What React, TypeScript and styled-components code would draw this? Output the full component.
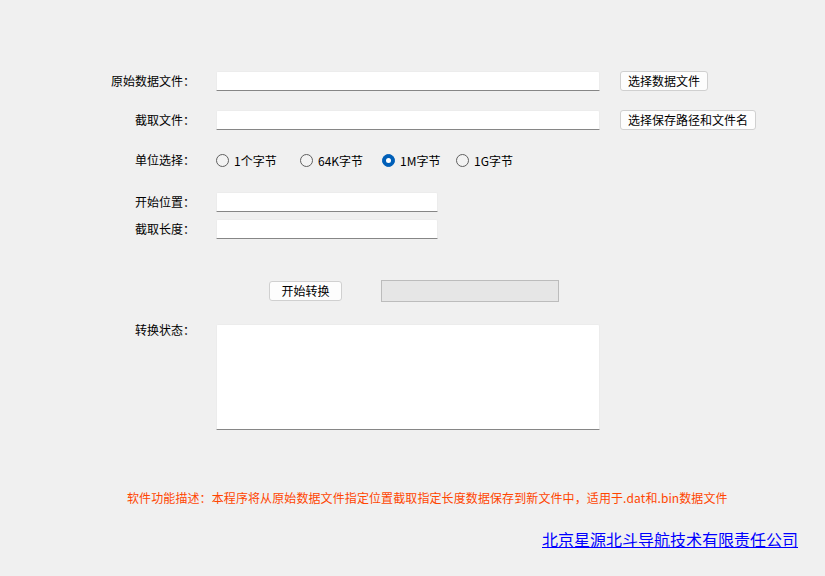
import styled, { createGlobalStyle } from "styled-components";

const Global = createGlobalStyle`
  html, body {
    margin: 0;
    padding: 0;
    background: #f0f0f0;
  }
  body {
    font-family: "Noto Sans CJK SC", "Noto Sans", sans-serif;
    font-size: 12px;
    color: #000;
  }
`;

const Window = styled.div`
  width: 825px;
  height: 576px;
  background: #f0f0f0;
  display: flex;
  flex-direction: column;
  overflow: hidden;
`;

const Row = styled.div<{ $top: number; $h: number; $align?: string }>`
  margin-top: ${(p) => p.$top}px;
  height: ${(p) => p.$h}px;
  display: flex;
  align-items: ${(p) => p.$align || "center"};
`;

// the full-width colon leaves ~7px blank on its right, so the box runs past 188
const Label = styled.label<{ $mt?: number }>`
  width: 195px;
  flex: none;
  text-align: right;
  margin-top: ${(p) => p.$mt || 0}px;
  line-height: 16px;
  margin-right: 21px;
  white-space: nowrap;
`;

const Field = styled.div<{ $w: number; $h?: number }>`
  width: ${(p) => p.$w}px;
  height: ${(p) => p.$h || 20}px;
  box-sizing: border-box;
  background: #fff;
  border: 1px solid #ececec;
  border-bottom: 1px solid #868686;
  border-radius: 2px 2px 0 0;
  flex: none;
`;

const Button = styled.button<{ $ml: number; $w?: number }>`
  margin-left: ${(p) => p.$ml}px;
  width: ${(p) => (p.$w ? `${p.$w}px` : "auto")};
  height: 20px;
  padding: 0 7px;
  box-sizing: border-box;
  background: #fdfdfd;
  border: 1px solid #d0d0d0;
  border-radius: 3px;
  font-family: inherit;
  font-size: 12px;
  line-height: 16px;
  color: #000;
  white-space: nowrap;
  flex: none;
`;

const RadioGroup = styled.div`
  display: flex;
  align-items: center;
`;

const RadioOption = styled.div<{ $w?: number }>`
  display: flex;
  align-items: center;
  width: ${(p) => (p.$w ? `${p.$w}px` : "auto")};
  gap: 5px;
  white-space: nowrap;
`;

const Dot = styled.span<{ $on?: boolean }>`
  width: 13px;
  height: 13px;
  box-sizing: border-box;
  border-radius: 50%;
  flex: none;
  display: flex;
  align-items: center;
  justify-content: center;
  background: ${(p) => (p.$on ? "#005fb8" : "#f3f3f3")};
  border: 1px solid ${(p) => (p.$on ? "#005fb8" : "#5f5f5f")};
  &::after {
    content: "";
    display: ${(p) => (p.$on ? "block" : "none")};
    width: 5px;
    height: 5px;
    border-radius: 50%;
    background: #fff;
  }
`;

const Progress = styled.div`
  margin-left: 39px;
  width: 178px;
  height: 22px;
  box-sizing: border-box;
  background: #e6e6e6;
  border: 1px solid #bcbcbc;
`;

const Desc = styled.div`
  margin-top: 60px;
  height: 16px;
  line-height: 16px;
  padding-left: 127px;
  color: #ff4500;
  white-space: nowrap;
  letter-spacing: 0.1px;
`;

const LinkRow = styled.div`
  margin-top: 23px;
  height: 20px;
  padding-left: 542px;
  line-height: 20px;
`;

const Company = styled.a`
  font-size: 16px;
  color: #0000ff;
  text-decoration: underline;
  white-space: nowrap;
`;

const units = [
  { text: "1个字节", w: 84 },
  { text: "64K字节", w: 82 },
  { text: "1M字节", w: 74, on: true },
  { text: "1G字节" },
];

export default function App() {
  return (
    <Window>
      <Global />
      <Row $top={71} $h={20}>
        <Label>原始数据文件：</Label>
        <Field $w={384} />
        <Button $ml={20}>选择数据文件</Button>
      </Row>
      <Row $top={19} $h={20}>
        <Label>截取文件：</Label>
        <Field $w={384} />
        <Button $ml={20}>选择保存路径和文件名</Button>
      </Row>
      <Row $top={20} $h={20}>
        <Label>单位选择：</Label>
        <RadioGroup>
          {units.map((u) => (
            <RadioOption key={u.text} $w={u.w}>
              <Dot $on={u.on} />
              {u.text}
            </RadioOption>
          ))}
        </RadioGroup>
      </Row>
      <Row $top={22} $h={20}>
        <Label>开始位置：</Label>
        <Field $w={222} />
      </Row>
      <Row $top={7} $h={20}>
        <Label>截取长度：</Label>
        <Field $w={222} />
      </Row>
      <Row $top={41} $h={22}>
        <Label />
        <Button $ml={53} $w={73}>开始转换</Button>
        <Progress />
      </Row>
      <Row $top={22} $h={106} $align="flex-start">
        <Label $mt={-2}>转换状态：</Label>
        <Field $w={384} $h={106} />
      </Row>
      <Desc>
        软件功能描述：本程序将从原始数据文件指定位置截取指定长度数据保存到新文件中，适用于.dat和.bin数据文件
      </Desc>
      <LinkRow>
        <Company href="#">北京星源北斗导航技术有限责任公司</Company>
      </LinkRow>
    </Window>
  );
}
